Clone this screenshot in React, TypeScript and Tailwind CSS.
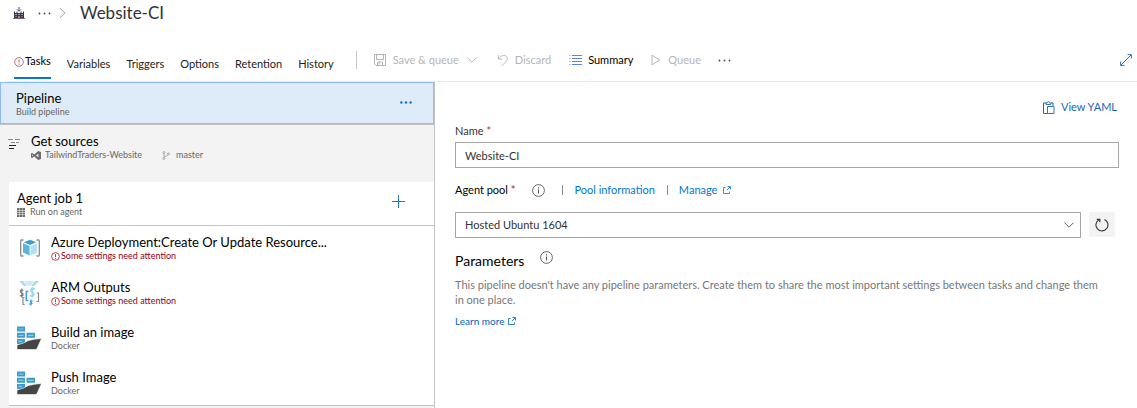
import React, { useState } from "react";

type IconProps = { className?: string };

const AlertIcon = ({ className }: IconProps) => (
  <svg viewBox="0 0 10 10" className={className} fill="none" stroke="currentColor" aria-hidden="true">
    <circle cx="5" cy="5" r="4.3" strokeWidth="0.8" />
    <path d="M5 2.5v3.2M5 6.6v1" strokeWidth="0.9" />
  </svg>
);

const InfoIcon = ({ className }: IconProps) => (
  <svg viewBox="0 0 13 13" className={className} fill="none" stroke="currentColor" aria-hidden="true">
    <circle cx="6.5" cy="6.5" r="5.9" strokeWidth="0.9" />
    <path d="M6.5 5.5v4M6.5 3.3v1.2" />
  </svg>
);

const BuildIcon = ({ className }: IconProps) => (
  <svg viewBox="0 0 12 12" className={className} aria-hidden="true">
    <path d="M1 11V4.500h1V6h1.500V4.500h1V6h3V4.500h1V6H10V4.500h1V11z" fill="#3a3654" />
    <path d="M6 0v4M4 2.300l2 2 2-2" stroke="#55506e" fill="none" />
    <path d="M2.500 7h1v1h-1zM5.500 7h1v1h-1zM8.500 7h1v1h-1z" fill="#fff" />
    <path d="M2.500 9h1v1h-1zM5.300 9h1.400v2H5.300zM8.500 9h1v1h-1z" fill="#e0a48f" />
    <path d="M0 11.500h12" stroke="#6d6680" />
  </svg>
);

const SaveIcon = ({ className }: IconProps) => (
  <svg viewBox="0 0 12 12" className={className} fill="none" stroke="currentColor" aria-hidden="true">
    <path d="M.5.5h11v11H2l-1.500-1.500zM2.500.5v5h7v-5M3.500 11.500v-3.500h5v3.500M5.200 8.500v2" />
  </svg>
);

const UndoIcon = ({ className }: IconProps) => (
  <svg viewBox="0 0 12 14" className={className} fill="none" stroke="currentColor" aria-hidden="true">
    <path d="M1.500 1v4.500h4.500M1.700 5.300C3.200 3 5 1.500 7.300 1.500c4.200 0 5 4.300 2.500 6.800L5 13" />
  </svg>
);

const SummaryIcon = ({ className }: IconProps) => (
  <svg viewBox="0 0 13 10" className={className} fill="none" stroke="currentColor" aria-hidden="true">
    <path d="M3 .5h10M3 3.500h10M3 6.500h10M3 9.500h10" stroke="#5b86d4" />
    <path d="M0 .5h1.500M0 3.500h1.500M0 6.500h1.500M0 9.500h1.500" stroke="#9fb4dc" />
  </svg>
);

const PlayIcon = ({ className }: IconProps) => (
  <svg viewBox="0 0 10 12" className={className} fill="none" stroke="currentColor" aria-hidden="true">
    <path d="M1 1.200v9.600L8.800 6z" />
  </svg>
);

const ChevronDown = ({ className }: IconProps) => (
  <svg viewBox="0 0 10 6" className={className} fill="none" stroke="currentColor" aria-hidden="true">
    <path d="M.4.6L5 5.200 9.600.6" />
  </svg>
);

const ChevronRight = ({ className }: IconProps) => (
  <svg viewBox="0 0 7 12" className={className} fill="none" stroke="currentColor" aria-hidden="true">
    <path d="M.8 1l5 5-5 5" />
  </svg>
);

const Dots = ({ className, r }: IconProps & { r: number }) => (
  <svg viewBox="0 0 13 3" className={className} fill="currentColor" aria-hidden="true">
    <circle cx="1.500" cy="1.500" r={r} />
    <circle cx="6.500" cy="1.500" r={r} />
    <circle cx="11.500" cy="1.500" r={r} />
  </svg>
);

const ExpandIcon = ({ className }: IconProps) => (
  <svg viewBox="0 0 12 12" className={className} fill="none" stroke="currentColor" aria-hidden="true">
    <path d="M.8 11.200L11.200.8M7.500.6h3.900v3.900M.6 7.500v3.900h3.900" />
  </svg>
);

const ClipboardIcon = ({ className }: IconProps) => (
  <svg viewBox="0 0 12 13" className={className} fill="none" stroke="currentColor" aria-hidden="true">
    <path d="M4.500 12.500h-4v-10.500h2.500M8 2h2v3" />
    <path d="M3 3.500V1.800h1.200C4.400.2 6.300.2 6.500 1.800h1.200v1.700zM4.500 5.500h6.500v7h-6.500z" strokeWidth="0.9" />
  </svg>
);

const ExternalIcon = ({ className }: IconProps) => (
  <svg viewBox="0 0 8 8" className={className} fill="none" stroke="currentColor" aria-hidden="true">
    <path d="M2.500 1.500h-2v6h6v-2M4.500.5h3v3M7.300.7L3.800 4.200" strokeWidth="0.8" />
  </svg>
);

const RefreshIcon = ({ className }: IconProps) => (
  <svg viewBox="0 0 14 14" className={className} fill="none" stroke="currentColor" aria-hidden="true">
    <path d="M4 1.700a6 6 0 1 0 5.500-.2" strokeWidth="1.100" />
    <path d="M1.800 1.300h3v3" strokeWidth="1.200" />
  </svg>
);

const SourcesIcon = ({ className }: IconProps) => (
  <svg viewBox="0 0 12 10" className={className} fill="none" stroke="currentColor" aria-hidden="true">
    <path d="M0 .5h5M7 .5h5M3 3.500h4M8 3.500h3" stroke="#8a8a8a" />
    <path d="M1 6.500h7M1 9.500h5" />
  </svg>
);

const VisualStudioIcon = ({ className }: IconProps) => (
  <svg viewBox="0 0 10 9" className={className} aria-hidden="true">
    <path fillRule="evenodd" fill="#6b6b6b" d="M7.200 0L10 1v7L7.200 9 3.300 5.400 1.200 7 0 6.400V2.600L1.200 2l2.100 1.600zM7.400 2.700L5 4.500l2.400 1.800zM1 3.500v2l1.100-1z" />
  </svg>
);

const BranchIcon = ({ className }: IconProps) => (
  <svg viewBox="0 0 8 9" className={className} fill="none" stroke="#9a9a9a" strokeWidth="0.8" aria-hidden="true">
    <circle cx="2" cy="1.500" r="1" />
    <circle cx="6.500" cy="2.800" r="1" />
    <circle cx="1.800" cy="7.500" r="1" />
    <path d="M2 2.500v4M6 3.800C5.500 5.500 3 4.800 2.100 6.200" />
  </svg>
);

const ServerIcon = ({ className }: IconProps) => (
  <svg viewBox="0 0 8 9" className={className} aria-hidden="true">
    <path d="M0 0h8v2H0zM0 2.500h8v1.800H0zM0 4.800h8v1.800H0zM0 7.100h8V9H0z" fill="#707070" />
    <path d="M2.500 0v9M5.500 0v9" stroke="#fff" strokeWidth="0.4" />
  </svg>
);

const CubeIcon = () => (
  <svg viewBox="0 0 20 18" className="h-[18px] w-5" aria-hidden="true">
    <path d="M3.500 1H1.500Q.7 1 .7 2v14q0 1 .8 1h2M16.500 1h2q.8 0 .8 1v14q0 1-.8 1h-2" fill="none" stroke="#8c8c8c" strokeWidth="1.300" />
    <path d="M10 .8l6.200 2.400L10 6 3.800 3.200z" fill="#3f9fcc" />
    <path d="M3 4.200L9.600 7v9.600L3 13.500z" fill="#5cb5dc" />
    <path d="M17 4.200L10.400 7v9.600l6.600-3.100z" fill="#b3e0f2" />
  </svg>
);

const ArmOutputsIcon = () => (
  <svg viewBox="0 0 21 25" className="h-[25px] w-[21px]" aria-hidden="true">
    <path d="M0 0l5 5h3L4 0zM20 0l-5 5h-3L16 0z" fill="#a9dbef" />
    <path d="M5 0h10l-3 4.500H8.500z" fill="#cfeaf5" />
    <g fill="none">
      <path d="M4.500 9.300c-3-1.200-4.500 1.300-2 2.500s2.500 4-1.700 2.800M2.800 7.500v9" stroke="#777" strokeWidth="1.100" />
      <path d="M16 8.200c-4-1.700-5.500 1.200-2.700 3s2 5-2.600 3.300M13.300 6v10.500" stroke="#9ed8ef" strokeWidth="1.600" />
      <path d="M9.500 10.500H7.300v9h2.200" stroke="#3fa6d5" strokeWidth="1.500" />
      <path d="M17.500 12h2v8.500h-2" stroke="#8a8a8a" strokeWidth="1.200" />
      <path d="M5.500 16.500H4v7h1.700" stroke="#8a8a8a" strokeWidth="1.200" />
      <path d="M13.800 20c-2.500-.8-3.300.8-1.700 1.400s1 2.400-1.900 1.500M12 18.500v6" stroke="#2f9fd4" strokeWidth="1.200" />
    </g>
  </svg>
);

const DockerShipIcon = () => (
  <svg viewBox="0 0 25 24" className="h-6 w-[25px]" aria-hidden="true">
    <path d="M0 .5h8v5H0zM0 6.800h8v5H0zM9.500 6.800h8.500v5H9.500zM0 13.100h8v5H0z" fill="#3c9dcb" />
    <path d="M1.500 3h5M1.500 9.300h5M11 9.300h5.500M1.500 15.300h3.500" stroke="#8acbe5" strokeWidth="1.200" />
    <path d="M24.500 12.500L20 22.500q-.5 1-2 1H0v-4.500q7-1.500 11.500-4.500 5-1.500 13-2z" fill="#454545" stroke="#fff" strokeWidth="0.600" />
  </svg>
);

const PlusIcon = ({ className }: IconProps) => (
  <svg viewBox="0 0 13 13" className={className} fill="none" stroke="currentColor" aria-hidden="true">
    <path d="M6.500 0v13M0 6.500h13" />
  </svg>
);

const tabs = ["Variables", "Triggers", "Options", "Retention", "History"];

const tasks = [
  { title: "Azure Deployment:Create Or Update Resource...", sub: "Some settings need attention", alert: true, icon: <CubeIcon /> },
  { title: "ARM Outputs", sub: "Some settings need attention", alert: true, icon: <ArmOutputsIcon /> },
  { title: "Build an image", sub: "Docker", alert: false, icon: <DockerShipIcon /> },
  { title: "Push Image", sub: "Docker", alert: false, icon: <DockerShipIcon /> },
];

function Header() {
  return (
    <header className="flex h-[26px] items-center pl-[13px]">
      <BuildIcon className="h-3 w-3" />
      <button type="button" aria-label="More breadcrumbs" className="ml-[13px] text-[#444]">
        <Dots r={0.9} className="h-[3px] w-[13px]" />
      </button>
      <ChevronRight className="ml-2 h-3 w-[7px] text-[#999]" />
      <h1 className="ml-[14px] text-[17px] leading-6 text-[#333]">Website-CI</h1>
    </header>
  );
}

function Toolbar() {
  return (
    <div className="ml-[7px] mt-4 flex h-10 items-center border-b border-[#eaeaea] pl-[7px] pr-[5px] text-[11px] leading-4">
      <nav className="flex h-full items-center gap-4 text-[#222]">
        <a href="#tasks" className="flex h-[35px] items-start border-b-2 border-[#0078d4] pt-[9px] text-black">
          <AlertIcon className="mt-1 h-[10px] w-[10px] text-[#a05060]" />
          <span className="ml-px">Tasks</span>
        </a>
        {tabs.map((t) => (
          <a key={t} href={"#" + t.toLowerCase()} className="pt-1">
            {t}
          </a>
        ))}
      </nav>
      <div className="flex h-full flex-1 items-center pb-[3px] pl-[22px] text-[#b5b5b5]">
        <div className="h-[18px] w-px bg-[#c8c8c8]" />
        <button type="button" disabled className="ml-[17px] flex items-center">
          <SaveIcon className="h-3 w-3" />
          <span className="ml-[7px]">Save &amp; queue</span>
          <ChevronDown className="ml-2 h-[6px] w-[10px]" />
        </button>
        <button type="button" disabled className="ml-5 flex items-center">
          <UndoIcon className="h-[13px] w-[11px]" />
          <span className="ml-[7px]">Discard</span>
        </button>
        <button type="button" className="ml-[18px] flex items-center text-black">
          <SummaryIcon className="h-[10px] w-[13px]" />
          <span className="ml-[6px]">Summary</span>
        </button>
        <button type="button" disabled className="ml-[18px] flex items-center">
          <PlayIcon className="h-3 w-[10px]" />
          <span className="ml-[7px]">Queue</span>
        </button>
        <button type="button" aria-label="More actions" className="ml-[17px] text-[#444]">
          <Dots r={0.9} className="h-[3px] w-[13px]" />
        </button>
        <button type="button" aria-label="Full screen" className="ml-auto text-[#2f6fc0]">
          <ExpandIcon className="h-3 w-3" />
        </button>
      </div>
    </div>
  );
}

function Sidebar() {
  return (
    <aside className="w-[435px] shrink-0 border-r border-[#c4c4c4] bg-[#f3f3f3]">
      <section className="flex h-[42px] items-start justify-between border border-[#8fbaf3] bg-[#deecf9] pl-[15px] pr-[21px] pt-[7px]">
        <div>
          <h2 className="text-[13px] leading-4 text-black">Pipeline</h2>
          <p className="text-[9px] leading-3 text-[#666]">Build pipeline</p>
        </div>
        <button type="button" aria-label="Pipeline actions" className="flex h-6 items-center text-[#0078d4]">
          <Dots r={1.3} className="h-[3px] w-3" />
        </button>
      </section>
      <section className="flex h-[58px] items-start border-t border-[#c4c4c4] pl-2 pt-2">
        <SourcesIcon className="mt-[6px] h-[10px] w-3 text-[#222]" />
        <div className="ml-[11px]">
          <h2 className="text-[13px] leading-4 text-black">Get sources</h2>
          <div className="flex items-center text-[9px] leading-3 text-[#666]">
            <VisualStudioIcon className="h-[9px] w-[10px]" />
            <span className="ml-1">TailwindTraders-Website</span>
            <BranchIcon className="ml-5 h-[9px] w-2" />
            <span className="ml-[6px]">master</span>
          </div>
        </div>
      </section>
      <div className="ml-[9px] border-b border-[#c4c4c4] bg-white">
        <section className="flex h-11 items-start justify-between border-b border-[#c4c4c4] pl-2 pr-[29px] pt-2">
          <div>
            <h2 className="text-[13px] leading-4 text-black">Agent job 1</h2>
            <div className="flex items-center gap-[5px] text-[9px] leading-3 text-[#666]">
              <ServerIcon className="h-[9px] w-2" />
              <span>Run on agent</span>
            </div>
          </div>
          <button type="button" aria-label="Add a task to Agent job 1" className="mt-[5px] text-[#2a72c8]">
            <PlusIcon className="h-[13px] w-[13px]" />
          </button>
        </section>
        <ul>
          {tasks.map((t) => (
            <li key={t.title} className="flex h-[45px] items-start pl-2 pt-2 last:h-11">
              <span className="flex h-[28px] w-[25px] items-center justify-center">{t.icon}</span>
              <div className="ml-[9px]">
                <h3 className="text-[13px] leading-4 text-black">{t.title}</h3>
                {t.alert ? (
                  <p className="flex items-center text-[9px] leading-3 text-[#990011]">
                    <AlertIcon className="mr-px h-[9px] w-[9px]" />
                    {t.sub}
                  </p>
                ) : (
                  <p className="text-[9px] leading-3 text-[#666]">{t.sub}</p>
                )}
              </div>
            </li>
          ))}
        </ul>
      </div>
    </aside>
  );
}

function Details() {
  const [name, setName] = useState("Website-CI");
  return (
    <main className="min-w-0 flex-1 pl-5 pr-[18px] pt-[17px] text-[11px] leading-4 text-[#333]">
      <div className="flex justify-end pr-[2px]">
        <button type="button" className="flex items-center gap-[6px] text-[#1b66b5]">
          <ClipboardIcon className="h-[13px] w-3" />
          View YAML
        </button>
      </div>
      <label htmlFor="name" className="mt-2 block">
        Name <span className="text-[#c03030]">*</span>
      </label>
      <input
        id="name"
        value={name}
        onChange={(e) => setName(e.target.value)}
        className="mt-[3px] block h-[26px] w-full border border-[#a6a6a6] bg-white px-[9px] outline-none"
      />
      <div className="mt-[14px] flex h-4 items-center">
        <label htmlFor="pool" className="text-black">
          Agent pool <span className="text-[#903040]">*</span>
        </label>
        <InfoIcon className="ml-[17px] h-[13px] w-[13px] text-[#555]" />
        <span className="ml-[17px] h-[10px] w-px bg-[#888]" />
        <a href="#pool" className="ml-[11px] text-[#0078d4]">Pool information</a>
        <span className="ml-3 h-[10px] w-px bg-[#888]" />
        <a href="#manage" className="ml-[11px] flex items-center gap-[6px] text-[#0078d4]">
          Manage
          <ExternalIcon className="h-2 w-2" />
        </a>
      </div>
      <div className="mt-[14px] flex pr-1">
        <div className="relative flex-1">
          <select id="pool" className="block h-[26px] w-full appearance-none border border-[#a6a6a6] bg-white px-[9px] outline-none">
            <option>Hosted Ubuntu 1604</option>
          </select>
          <ChevronDown className="pointer-events-none absolute right-[7px] top-[10px] h-[6px] w-[10px] text-[#666]" />
        </div>
        <button type="button" aria-label="Refresh agent pools" className="ml-2 flex h-[25px] w-[26px] items-center justify-center bg-[#f3f3f3] text-[#333]">
          <RefreshIcon className="h-[14px] w-[14px]" />
        </button>
      </div>
      <div className="mt-3 flex items-start">
        <h2 className="pt-px text-[14px] leading-5 text-black">Parameters</h2>
        <InfoIcon className="ml-4 mt-px h-[13px] w-[13px] text-[#555]" />
      </div>
      <p className="mt-[6px] pr-3 leading-[15px] text-[#777]">
        This pipeline doesn't have any pipeline parameters. Create them to share the most important settings between tasks and change them in one place.
      </p>
      <a href="#learn" className="mt-2 inline-flex items-center gap-1 text-[10px] leading-3 text-[#0064bf]">
        Learn more
        <ExternalIcon className="h-2 w-2" />
      </a>
    </main>
  );
}

export default function App() {
  return (
    <div className="flex min-h-screen flex-col bg-white font-[Lato,'Open_Sans',sans-serif]">
      <Header />
      <Toolbar />
      <div className="flex flex-1">
        <Sidebar />
        <Details />
      </div>
    </div>
  );
}
